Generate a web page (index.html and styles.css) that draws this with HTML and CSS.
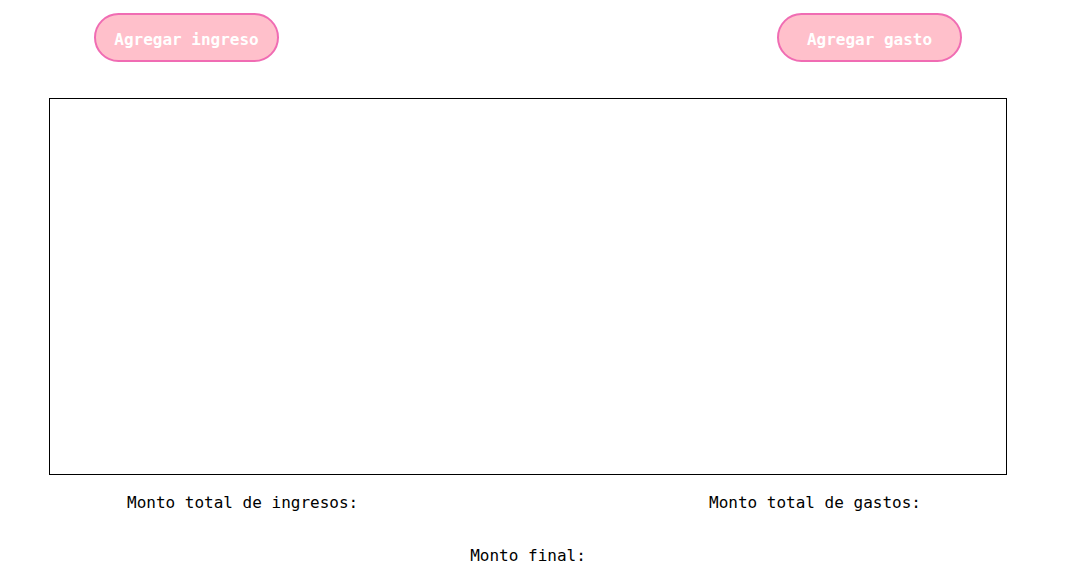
FILE: index.html
```html
<!DOCTYPE html>
<html lang="es">
<head>
<meta charset="utf-8">
<title>Presupuesto</title>
<link rel="stylesheet" href="styles.css">
</head>
<body>
<div class="actions">
  <button class="btn">Agregar ingreso</button>
  <button class="btn">Agregar gasto</button>
</div>
<div class="board"></div>
<div class="totals">
  <p class="total">Monto total de ingresos:</p>
  <p class="total">Monto total de gastos:</p>
</div>
<p class="final">Monto final:</p>
</body>
</html>
```
FILE: styles.css
```css
html, body {
  margin: 0;
  padding: 0;
  background: #fff;
}
body {
  font-family: "DejaVu Sans Mono", "Liberation Mono", monospace;
  font-size: 16px;
  color: #000;
}
.actions {
  display: flex;
  justify-content: space-between;
  padding: 13px 109px 0 94px;
}
.btn {
  box-sizing: border-box;
  width: 185px;
  height: 49px;
  border: 2px solid #f06cb3;
  border-radius: 25px;
  background: #ffc0cb;
  color: #fff;
  font-family: "DejaVu Sans Mono", "Liberation Mono", monospace;
  font-weight: bold;
  font-size: 16px;
  padding: 4px 0 0;
}
.board {
  box-sizing: border-box;
  margin: 36px 0 0 49px;
  width: 958px;
  height: 377px;
  border: 1px solid #000;
}
.totals {
  display: grid;
  grid-template-columns: 582px 1fr;
  width: 958px;
  box-sizing: border-box;
  margin-left: 49px;
  padding-left: 78px;
  margin-top: 18px;
}
.total {
  margin: 0;
  line-height: 20px;
}
.final {
  width: 958px;
  margin: 33px 0 0 49px;
  text-align: center;
  line-height: 20px;
}
```
